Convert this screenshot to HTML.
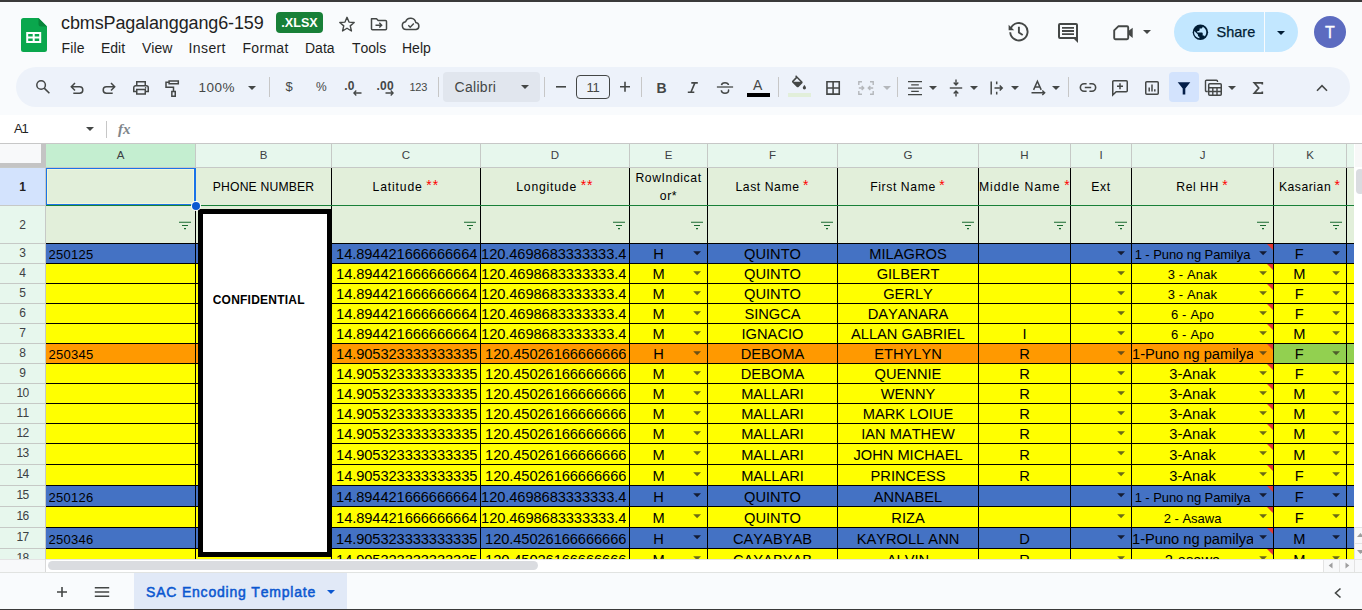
<!DOCTYPE html>
<html><head><meta charset="utf-8"><title>cbmsPagalanggang6-159</title>
<style>
html,body{margin:0;padding:0;}
body{font-kerning:none;width:1362px;height:610px;overflow:hidden;position:relative;background:#f9fbfd;font-family:"Liberation Sans",sans-serif;color:#1f1f1f;}
div,svg,span{position:absolute;}
#grid{left:0;top:0;width:1362px;height:559px;overflow:hidden;}
#grid div{overflow:hidden;white-space:nowrap;}
.ch{height:22px;line-height:23px;text-align:center;font-size:11.5px;color:#3c4043;}
.rh{left:0;width:45px;text-align:center;font-size:12px;color:#3c4043;}
.h1{text-align:center;font-size:12.2px;color:#000;}
.h1 b{color:#f00;font-weight:normal;position:relative;top:-1.5px;left:-.5px;font-size:14px;line-height:0;}
.ca{text-align:center;font-size:14.670px;color:#000;}
.cc{text-align:center;font-size:13px;color:#000;}
.conf{font-weight:bold;font-size:12px;line-height:14px;color:#000;}
.t{white-space:nowrap;}
</style></head><body>
<div style="left:0;top:0;width:1362px;height:2px;background:#3a3a3a"></div>
<!-- top bar -->
<svg style="left:21px;top:18px" width="26" height="34" viewBox="0 0 26 34"><path d="M2.500 0h15L26 8.500V31.500a2.500 2.500 0 0 1-2.500 2.500h-21A2.500 2.500 0 0 1 0 31.500v-29A2.500 2.500 0 0 1 2.500 0z" fill="#0aa74d"/><path d="M17.500 0L26 8.500h-6A2.500 2.500 0 0 1 17.500 6z" fill="#07853a"/><path d="M5.200 14v11h15V14zm2 2h4.500v2.500H7.200zm6.500 0h4.500v2.500h-4.500zm-6.500 4.500h4.500V23H7.200zm6.500 0h4.500V23h-4.500z" fill="#fff"/></svg>
<div class="t" style="left:61px;top:12px;font-size:18px;line-height:22px;color:#1f1f1f;letter-spacing:-.12px;">cbmsPagalanggang6-159</div>
<div class="t" style="left:276px;top:12px;width:47px;height:21px;border-radius:4px;background:#188038;color:#fff;font-weight:bold;font-size:12.600px;line-height:23.500px;text-align:center;">.XLSX</div>
<div class="t menu" style="left:61.500px;top:40px;font-size:14px;line-height:16px;color:#1f1f1f;letter-spacing:.2px">File</div>
<div class="t menu" style="left:101px;top:40px;font-size:14px;line-height:16px;">Edit</div>
<div class="t menu" style="left:142px;top:40px;font-size:14px;line-height:16px;">View</div>
<div class="t menu" style="left:188.500px;top:40px;font-size:14px;line-height:16px;letter-spacing:.4px">Insert</div>
<div class="t menu" style="left:242.500px;top:40px;font-size:14px;line-height:16px;letter-spacing:.3px">Format</div>
<div class="t menu" style="left:305px;top:40px;font-size:14px;line-height:16px;">Data</div>
<div class="t menu" style="left:352px;top:40px;font-size:14px;line-height:16px;">Tools</div>
<div class="t menu" style="left:402px;top:40px;font-size:14px;line-height:16px;">Help</div>
<!-- share -->
<div style="left:1174px;top:12px;width:124px;height:40px;border-radius:20px;background:#c2e7ff;"></div>
<div style="left:1264px;top:12px;width:1px;height:40px;background:#f9fbfd;"></div>
<div class="t" style="left:1216.500px;top:22px;font-size:14.500px;line-height:20px;color:#001d35;-webkit-text-stroke:.25px #001d35;">Share</div>
<div style="left:1314px;top:16px;width:32px;height:32px;border-radius:50%;background:#5c6bc0;color:#fff;font-size:16px;line-height:33px;text-align:center;-webkit-text-stroke:.3px #fff;">T</div>
<svg style="left:338px;top:15px" width="18" height="18" viewBox="0 0 18 18"><path d="M9 2.300L11 7.100L16.200 7.500L12.250 10.900L13.450 16L9 13.250L4.550 16L5.750 10.900L1.800 7.500L7 7.100z" stroke="#444746" stroke-width="1.4" fill="none" stroke-linejoin="round"/></svg>
<svg style="left:370px;top:17px" width="18" height="14" viewBox="0 0 18 14"><path d="M1.500 1.750H6.500L8.200 3.500H15.500a1 1 0 0 1 1 1V11.800a1 1 0 0 1-1 1H2.500a1 1 0 0 1-1-1V1.750z" stroke="#444746" stroke-width="1.5" fill="none" stroke-linejoin="round"/><path d="M5.500 8.200H11.500M9.300 5.800L11.700 8.200L9.300 10.600" stroke="#444746" stroke-width="1.4" fill="none" /></svg>
<svg style="left:401px;top:17px" width="20" height="14" viewBox="0 0 20 14"><path d="M5.200 12.500a3.900 3.900 0 0 1-.6-7.750A5.300 5.300 0 0 1 14.800 5.600a3.500 3.500 0 0 1 .3 6.900z" stroke="#444746" stroke-width="1.5" fill="none" stroke-linejoin="round"/><path d="M7.300 8.300L9.200 10.200L12.800 6.600" stroke="#444746" stroke-width="1.4" fill="none" /></svg>
<svg style="left:1008px;top:21px" width="22" height="22" viewBox="0 0 22 22"><path d="M2.900 7.200A8.700 8.700 0 1 1 2.200 11.300" stroke="#444746" stroke-width="1.9" fill="none" /><path d="M.6 3.700V9.300H6.200z" fill="#444746"/><path d="M10.900 5.700V11.500L14.700 14" stroke="#444746" stroke-width="1.9" fill="none" /></svg>
<svg style="left:1057px;top:22px" width="22" height="22" viewBox="0 0 22 22"><path d="M3 1H19a2 2 0 0 1 2 2V21L17 17H3a2 2 0 0 1-2-2V3a2 2 0 0 1 2-2zM3 3V15H19V3z" fill="#444746"/><path d="M5 5H17V6.800H5zM5 8.100H17V9.900H5zM5 11.200H17V13H5z" fill="#444746"/></svg>
<svg style="left:1112px;top:24px" width="22" height="18" viewBox="0 0 22 18"><path d="M6.300 2.300H15a1.200 1.200 0 0 1 1.200 1.200V14a1.200 1.200 0 0 1-1.200 1.200H3.400a1.200 1.200 0 0 1-1.200-1.200V6.400z" stroke="#444746" stroke-width="1.9" fill="none" stroke-linejoin="round"/><path d="M16 7.300L20.700 3.700V13.900L16 10.300z" fill="#444746"/></svg>
<svg style="left:1143.0px;top:29.5px" width="8" height="4" viewBox="0 0 8 4"><path d="M0 0h8L4.0 4z" fill="#444746"/></svg>
<svg style="left:1192px;top:24px" width="17" height="17" viewBox="0 0 17 17"><circle cx="8.400" cy="8.300" r="7.700" fill="#001d35"/><path d="M7.400 14.300v-1.500c-.8 0-1.500-.7-1.500-1.500v-.8L2.300 6.900c-.1.500-.2.900-.2 1.400 0 3.100 2.300 5.600 5.300 6zM12.800 12.400c.8-.9 1.300-2.100 1.500-3.300.3-2.800-1.300-5.300-3.700-6.300v.3c0 .8-.7 1.500-1.500 1.500H7.600v1.500c0 .4-.3.800-.8.800H5.300v1.500h4.600c.4 0 .8.300.8.800v2.300h.8c.6-.1 1.100.3 1.300.9z" fill="#c2e7ff"/></svg>
<svg style="left:1277.0px;top:30.5px" width="8" height="4" viewBox="0 0 8 4"><path d="M0 0h8L4.0 4z" fill="#001d35"/></svg>
<!-- toolbar -->
<div style="left:16px;top:67px;width:1334px;height:40px;border-radius:20px;background:#edf2fa;"></div>
<svg style="left:35px;top:79px" width="16" height="16" viewBox="0 0 16 16"><circle cx="6.1" cy="6" r="4.3" stroke="#444746" stroke-width="1.5" fill="none"/><path d="M9.2 9.1L14.4 14.3" stroke="#444746" stroke-width="1.6" fill="none" /></svg>
<svg style="left:70px;top:80px" width="16" height="16" viewBox="0 0 16 16"><path d="M5 3L1.3 6.8L5 10.6M1.6 6.8H9.6a3.2 3.2 0 0 1 0 6.4H3.3" stroke="#444746" stroke-width="1.5" fill="none" /></svg>
<svg style="left:100px;top:80px" width="16" height="16" viewBox="0 0 16 16"><path d="M11 3L14.7 6.8L11 10.6M14.400 6.8H6.4a3.2 3.2 0 0 0 0 6.4H12.7" stroke="#444746" stroke-width="1.5" fill="none" /></svg>
<svg style="left:132px;top:80px" width="18" height="16" viewBox="0 0 18 16"><path d="M4.75 5.5V1.75h8.5V5.5" stroke="#444746" stroke-width="1.5" fill="none" /><path d="M4.75 11.5H1.75V7.700a2 2 0 0 1 2-2h10.500a2 2 0 0 1 2 2V11.500H13.250" stroke="#444746" stroke-width="1.5" fill="none" /><path d="M4.750 9.500h8.500v4.500h-8.500z" stroke="#444746" stroke-width="1.5" fill="none" /><circle cx="13.6" cy="7.900" r=".8" fill="#444746"/></svg>
<svg style="left:164px;top:79px" width="16" height="19" viewBox="0 0 16 19"><path d="M5.1 1.950h9.200v2.700H5.100z" stroke="#444746" stroke-width="1.5" fill="none" /><path d="M5 3.300H2V8.200H9.500V12.200" stroke="#444746" stroke-width="1.5" fill="none" /><path d="M7.850 12.600h3.400v4.600h-3.400z" stroke="#444746" stroke-width="1.5" fill="none" /></svg>
<div class="t" style="left:198.5px;top:79.5px;font-size:13.5px;line-height:15.5px;color:#444746;letter-spacing:.5px">100%</div>
<svg style="left:248.0px;top:85.7px" width="8" height="4" viewBox="0 0 8 4"><path d="M0 0h8L4.0 4z" fill="#444746"/></svg>
<div style="left:269px;top:77px;width:1px;height:20px;background:#c7c7c7"></div>
<div class="t" style="left:285.4px;top:79px;font-size:13px;line-height:15px;color:#444746;">$</div>
<div class="t" style="left:316px;top:80px;font-size:12px;line-height:14px;color:#444746;">%</div>
<div class="t" style="left:344.3px;top:78.5px;font-size:12px;line-height:14px;color:#444746;font-weight:bold;letter-spacing:.2px">.0</div>
<svg style="left:353px;top:90px" width="9" height="6" viewBox="0 0 9 6"><path d="M.8 3H8.500M3.300 .5L.8 3L3.300 5.500" stroke="#444746" stroke-width="1.3" fill="none" /></svg>
<div class="t" style="left:376.5px;top:78.5px;font-size:12px;line-height:14px;color:#444746;font-weight:bold;letter-spacing:.2px">.00</div>
<svg style="left:384.5px;top:90px" width="9" height="6" viewBox="0 0 9 6"><path d="M.5 3H8.200M5.700 .5L8.200 3L5.700 5.500" stroke="#444746" stroke-width="1.3" fill="none" /></svg>
<div class="t" style="left:409.5px;top:81px;font-size:11px;line-height:13px;color:#444746;letter-spacing:-.3px">123</div>
<div style="left:438px;top:77px;width:1px;height:20px;background:#c7c7c7"></div>
<div style="left:443px;top:72px;width:97px;height:30px;border-radius:4px;background:#e1e6ee"></div>
<div class="t" style="left:454.5px;top:79px;font-size:14px;line-height:16px;color:#444746;letter-spacing:.3px">Calibri</div>
<svg style="left:521.0px;top:85.0px" width="8" height="4" viewBox="0 0 8 4"><path d="M0 0h8L4.0 4z" fill="#444746"/></svg>
<div style="left:544px;top:77px;width:1px;height:20px;background:#c7c7c7"></div>
<svg style="left:555px;top:82px" width="12" height="10" viewBox="0 0 12 10"><path d="M1 4.800H11" stroke="#444746" stroke-width="1.6" fill="none" /></svg>
<div style="left:576px;top:75px;width:34px;height:24px;border-radius:4px;border:1px solid #444746;box-sizing:border-box"></div>
<div class="t" style="left:576px;top:75px;width:34px;height:24px;line-height:25px;text-align:center;font-size:13px;letter-spacing:-1.300px;text-indent:-1px;color:#444746">11</div>
<svg style="left:619px;top:81px" width="12" height="12" viewBox="0 0 12 12"><path d="M1 5.800H11M6 .8V10.800" stroke="#444746" stroke-width="1.6" fill="none" /></svg>
<div style="left:641px;top:77px;width:1px;height:20px;background:#c7c7c7"></div>
<div class="t" style="left:656.5px;top:79.5px;font-size:14px;line-height:16px;color:#444746;font-weight:bold">B</div>
<svg style="left:686px;top:80px" width="14" height="14" viewBox="0 0 14 14"><path d="M5.300 2.900H11.800M1.800 12.300H8.300M8.900 2.900L4.900 12.300" stroke="#444746" stroke-width="1.6" fill="none" /></svg>
<svg style="left:716px;top:81px" width="18" height="14" viewBox="0 0 18 14"><path d="M.9 6H17.100" stroke="#444746" stroke-width="1.3" fill="none" /><path d="M5.500 4.200C5.700 2.400 7.300 1.700 9 1.700s3.300 .7 3.500 2.300" stroke="#444746" stroke-width="1.5" fill="none" /><path d="M5.300 9.200C5.500 11.300 7.200 12.300 9 12.300s3.600-1 3.600-2.700c0-.5-.1-.8-.3-1.100" stroke="#444746" stroke-width="1.5" fill="none" /></svg>
<div class="t" style="left:753px;top:76.5px;font-size:14px;line-height:16px;color:#444746;">A</div>
<div style="left:747px;top:93px;width:23px;height:4px;background:#000"></div>
<div style="left:778px;top:77px;width:1px;height:20px;background:#c7c7c7"></div>
<svg style="left:788px;top:75px" width="24" height="16" viewBox="0 0 24 16"><path d="M7.100 1.300L8.100 .3L14.300 6.500C14.800 7 14.800 7.700 14.300 8.200L10.600 11.900C10.100 12.400 9.300 12.400 8.800 11.900L4.300 7.400C3.800 6.900 3.800 6.200 4.300 5.700L7.900 2.100zM9 3.200L5.500 6.700H12.500z" fill="#444746"/><path d="M16.400 9.900s-1.600 1.800-1.600 2.900a1.600 1.600 0 0 0 3.200 0c0-1.100-1.600-2.900-1.600-2.900z" fill="#444746"/></svg>
<div style="left:788px;top:93px;width:23px;height:4px;background:#e2efda"></div>
<svg style="left:825px;top:80px" width="16" height="16" viewBox="0 0 16 16"><path d="M1.950 1.800h12.300v12.300H1.950zM8.100 1.800v12.300M1.950 7.950h12.300" stroke="#444746" stroke-width="1.6" fill="none" /></svg>
<svg style="left:857px;top:80px" width="18" height="16" viewBox="0 0 18 16"><path d="M5 1.800H1.800V5M1.800 11v3.200H5M13 1.800h3.200V5M16.200 11v3.200H13" stroke="#b4b7bb" stroke-width="1.4" fill="none" /><path d="M1.800 8H6.500M4.700 6L6.700 8L4.700 10M16.200 8H11.500M13.300 6L11.300 8L13.300 10" stroke="#b4b7bb" stroke-width="1.4" fill="none" /></svg>
<svg style="left:882.8px;top:85.7px" width="8" height="4" viewBox="0 0 8 4"><path d="M0 0h8L4.0 4z" fill="#b4b7bb"/></svg>
<div style="left:897px;top:77px;width:1px;height:20px;background:#c7c7c7"></div>
<svg style="left:907px;top:80px" width="16" height="16" viewBox="0 0 16 16"><path d="M1 1.600H15M4.200 4.850H11.800M1 8.100H15M4.200 11.350H11.800M1 14.600H15" stroke="#444746" stroke-width="1.2" fill="none" /></svg>
<svg style="left:929.2px;top:85.7px" width="8" height="4" viewBox="0 0 8 4"><path d="M0 0h8L4.0 4z" fill="#444746"/></svg>
<svg style="left:948px;top:79px" width="16" height="18" viewBox="0 0 16 18"><path d="M1.800 9H14.200" stroke="#444746" stroke-width="1.4" fill="none" /><path d="M8 .5V5.500M5.700 3.600L8 5.900L10.300 3.600M8 17.500V12.500M5.700 14.400L8 12.100L10.300 14.400" stroke="#444746" stroke-width="1.4" fill="none" /></svg>
<svg style="left:969.8px;top:85.7px" width="8" height="4" viewBox="0 0 8 4"><path d="M0 0h8L4.0 4z" fill="#444746"/></svg>
<svg style="left:989px;top:80px" width="16" height="16" viewBox="0 0 16 16"><path d="M2.200 1.500V14.500" stroke="#444746" stroke-width="1.5" fill="none" /><path d="M7.700 1.500V4.200M7.700 11.800V14.500" stroke="#444746" stroke-width="1.5" fill="none" /><path d="M5.500 8H13M10.700 5.500L13.200 8L10.700 10.500" stroke="#444746" stroke-width="1.5" fill="none" /></svg>
<svg style="left:1010.8px;top:85.7px" width="8" height="4" viewBox="0 0 8 4"><path d="M0 0h8L4.0 4z" fill="#444746"/></svg>
<svg style="left:1030px;top:79px" width="17" height="18" viewBox="0 0 17 18"><path d="M3.600 10.900L7.400 2.300L11.200 10.900M4.900 8H9.900" stroke="#444746" stroke-width="1.5" fill="none" /><path d="M1.500 13.800H14.500M12.300 11.500L14.700 13.800L12.300 16.100" stroke="#444746" stroke-width="1.4" fill="none" /></svg>
<svg style="left:1051.9px;top:85.7px" width="8" height="4" viewBox="0 0 8 4"><path d="M0 0h8L4.0 4z" fill="#444746"/></svg>
<div style="left:1068px;top:77px;width:1px;height:20px;background:#c7c7c7"></div>
<svg style="left:1079px;top:82px" width="18" height="12" viewBox="0 0 18 12"><path d="M7.600 1.750H5.100a3.750 3.750 0 0 0 0 7.500H7.600M10.400 1.750H12.900a3.750 3.750 0 0 1 0 7.500H10.400M5.800 5.500H12.200" stroke="#444746" stroke-width="1.6" fill="none" /></svg>
<svg style="left:1111px;top:79px" width="18" height="18" viewBox="0 0 18 18"><path d="M2.750 1.750H15.250a1 1 0 0 1 1 1V11.750a1 1 0 0 1-1 1H5.200L1.750 16V2.750a1 1 0 0 1 1-1z" stroke="#444746" stroke-width="1.5" fill="none" /><path d="M9 4.200V10.200M6 7.200H12" stroke="#444746" stroke-width="1.5" fill="none" /></svg>
<svg style="left:1144px;top:80px" width="16" height="16" viewBox="0 0 16 16"><path d="M2.750 1.750H13.250a1 1 0 0 1 1 1V13.250a1 1 0 0 1-1 1H2.750a1 1 0 0 1-1-1V2.750a1 1 0 0 1 1-1z" stroke="#444746" stroke-width="1.5" fill="none" /><path d="M5.200 7.500V11.500M8 4.500V11.500M10.800 9.300V11.500" stroke="#444746" stroke-width="1.5" fill="none" /></svg>
<div style="left:1169px;top:72px;width:30px;height:30px;border-radius:4px;background:#d3e3fd"></div>
<svg style="left:1176px;top:81px" width="16" height="15" viewBox="0 0 16 15"><path d="M1.700 1.200H14.300L9.300 7.600V13.500H6.700V7.600z" fill="#041e49"/></svg>
<svg style="left:1204px;top:79px" width="19" height="18" viewBox="0 0 19 18"><path d="M3.800 12.500H2.500a1 1 0 0 1-1-1V2.200a1 1 0 0 1 1-1H12.500a1 1 0 0 1 1 1V3" stroke="#444746" stroke-width="1.4" fill="none" /><path d="M5.700 4.750H16.250a1 1 0 0 1 1 1V15.250a1 1 0 0 1-1 1H5.700a1 1 0 0 1-1-1V5.750a1 1 0 0 1 1-1z" stroke="#444746" stroke-width="1.5" fill="none" /><path d="M4.700 8.700H17.250M4.700 12.500H17.250M8.800 8.700V16.250M13 8.700V16.250" stroke="#444746" stroke-width="1.4" fill="none" /></svg>
<svg style="left:1228.0px;top:85.7px" width="8" height="4" viewBox="0 0 8 4"><path d="M0 0h8L4.0 4z" fill="#444746"/></svg>
<svg style="left:1252px;top:81px" width="12" height="14" viewBox="0 0 12 14"><path d="M10.300 3.400V1.900H2.300L6.700 7L2.300 12.100H10.300V10.600" stroke="#444746" stroke-width="1.7" fill="none" /></svg>
<svg style="left:1316px;top:84px" width="12" height="8" viewBox="0 0 12 8"><path d="M1 6.700L6 1.700L11 6.700" stroke="#444746" stroke-width="1.6" fill="none" /></svg>
<!-- formula bar -->
<div style="left:0;top:115px;width:1362px;height:28px;background:#fff;"></div>
<div style="left:0;top:143px;width:1362px;height:1px;background:#c7c7c7;"></div>
<div class="t" style="left:14px;top:121px;font-size:13px;line-height:16px;color:#1f1f1f;letter-spacing:-1.2px;">A1</div>
<svg style="left:86px;top:127px" width="8" height="4" viewBox="0 0 8 4"><path d="M0 0h8L4 4z" fill="#444746"/></svg>
<div style="left:106px;top:121px;width:1px;height:17px;background:#c7c7c7;"></div>
<div class="t" style="left:118px;top:120px;font-size:15px;line-height:18px;color:#80868b;font-style:italic;font-weight:bold;font-family:'Liberation Serif',serif;">fx</div>
<div id="grid">
<div style="left:0px;top:144px;width:1354px;height:24px;background:#e7f7ed"></div>
<div style="left:46px;top:144px;width:150px;height:23px;background:#c4eed0"></div>
<div class="ch" style="left:46px;top:144px;width:149px;">A</div>
<div style="left:195px;top:144px;width:1px;height:24px;background:#c6c9c6"></div>
<div class="ch" style="left:196px;top:144px;width:135px;">B</div>
<div style="left:331px;top:144px;width:1px;height:24px;background:#c6c9c6"></div>
<div class="ch" style="left:332px;top:144px;width:148px;">C</div>
<div style="left:480px;top:144px;width:1px;height:24px;background:#c6c9c6"></div>
<div class="ch" style="left:481px;top:144px;width:148px;">D</div>
<div style="left:629px;top:144px;width:1px;height:24px;background:#c6c9c6"></div>
<div class="ch" style="left:630px;top:144px;width:77px;">E</div>
<div style="left:707px;top:144px;width:1px;height:24px;background:#c6c9c6"></div>
<div class="ch" style="left:708px;top:144px;width:129px;">F</div>
<div style="left:837px;top:144px;width:1px;height:24px;background:#c6c9c6"></div>
<div class="ch" style="left:838px;top:144px;width:140px;">G</div>
<div style="left:978px;top:144px;width:1px;height:24px;background:#c6c9c6"></div>
<div class="ch" style="left:979px;top:144px;width:91px;">H</div>
<div style="left:1070px;top:144px;width:1px;height:24px;background:#c6c9c6"></div>
<div class="ch" style="left:1071px;top:144px;width:60px;">I</div>
<div style="left:1131px;top:144px;width:1px;height:24px;background:#c6c9c6"></div>
<div class="ch" style="left:1132px;top:144px;width:141px;">J</div>
<div style="left:1273px;top:144px;width:1px;height:24px;background:#c6c9c6"></div>
<div class="ch" style="left:1274px;top:144px;width:72px;">K</div>
<div style="left:1346px;top:144px;width:1px;height:24px;background:#c6c9c6"></div>
<div style="left:1354px;top:144px;width:1px;height:24px;background:#c6c9c6"></div>
<div style="left:46px;top:167px;width:1308px;height:1px;background:#c6c9c6"></div>
<div style="left:0px;top:168px;width:46px;height:391px;background:#e7f7ed"></div>
<div style="left:0px;top:168px;width:46px;height:37px;background:#d3e3fd"></div>
<div class="rh" style="top:168px;height:37px;line-height:39px;font-weight:bold;color:#1f1f1f;">1</div>
<div style="left:0px;top:205px;width:46px;height:1px;background:#c6c9c6"></div>
<div class="rh" style="top:206px;height:37px;line-height:38px;">2</div>
<div style="left:0px;top:243px;width:46px;height:1px;background:#c6c9c6"></div>
<div class="rh" style="top:244px;height:19px;line-height:19px;">3</div>
<div style="left:0px;top:263px;width:46px;height:1px;background:#c6c9c6"></div>
<div class="rh" style="top:264px;height:19px;line-height:19px;">4</div>
<div style="left:0px;top:283px;width:46px;height:1px;background:#c6c9c6"></div>
<div class="rh" style="top:284px;height:19px;line-height:19px;">5</div>
<div style="left:0px;top:303px;width:46px;height:1px;background:#c6c9c6"></div>
<div class="rh" style="top:304px;height:19px;line-height:19px;">6</div>
<div style="left:0px;top:323px;width:46px;height:1px;background:#c6c9c6"></div>
<div class="rh" style="top:324px;height:19px;line-height:19px;">7</div>
<div style="left:0px;top:343px;width:46px;height:1px;background:#c6c9c6"></div>
<div class="rh" style="top:344px;height:19px;line-height:19px;">8</div>
<div style="left:0px;top:363px;width:46px;height:1px;background:#c6c9c6"></div>
<div class="rh" style="top:364px;height:19px;line-height:19px;">9</div>
<div style="left:0px;top:383px;width:46px;height:1px;background:#c6c9c6"></div>
<div class="rh" style="top:384px;height:19px;line-height:19px;letter-spacing:-.6px;">10</div>
<div style="left:0px;top:403px;width:46px;height:1px;background:#c6c9c6"></div>
<div class="rh" style="top:404px;height:19px;line-height:19px;letter-spacing:-.6px;">11</div>
<div style="left:0px;top:423px;width:46px;height:1px;background:#c6c9c6"></div>
<div class="rh" style="top:424px;height:19px;line-height:19px;letter-spacing:-.6px;">12</div>
<div style="left:0px;top:443px;width:46px;height:1px;background:#c6c9c6"></div>
<div class="rh" style="top:444px;height:20px;line-height:19px;letter-spacing:-.6px;">13</div>
<div style="left:0px;top:464px;width:46px;height:1px;background:#c6c9c6"></div>
<div class="rh" style="top:465px;height:20px;line-height:19px;letter-spacing:-.6px;">14</div>
<div style="left:0px;top:485px;width:46px;height:1px;background:#c6c9c6"></div>
<div class="rh" style="top:486px;height:20px;line-height:19px;letter-spacing:-.6px;">15</div>
<div style="left:0px;top:506px;width:46px;height:1px;background:#c6c9c6"></div>
<div class="rh" style="top:507px;height:20px;line-height:19px;letter-spacing:-.6px;">16</div>
<div style="left:0px;top:527px;width:46px;height:1px;background:#c6c9c6"></div>
<div class="rh" style="top:528px;height:20px;line-height:19px;letter-spacing:-.6px;">17</div>
<div style="left:0px;top:548px;width:46px;height:1px;background:#c6c9c6"></div>
<div class="rh" style="top:549px;height:20px;line-height:19px;letter-spacing:-.6px;">18</div>
<div style="left:0px;top:569px;width:46px;height:1px;background:#c6c9c6"></div>
<div style="left:45px;top:168px;width:1px;height:391px;background:#c6c9c6"></div>
<div style="left:0px;top:144px;width:46px;height:23px;background:#c4c4c4"></div>
<div style="left:0px;top:144px;width:41px;height:19px;background:#f8f9fa"></div>
<div style="left:0px;top:167px;width:46px;height:1px;background:#c6c9c6"></div>
<div style="left:46px;top:168px;width:1308px;height:76px;background:#e2efda"></div>
<div style="left:46px;top:244px;width:1308px;height:20px;background:#4472c4"></div>
<div style="left:46px;top:263px;width:1308px;height:1px;background:#000"></div>
<div style="left:46px;top:264px;width:1308px;height:20px;background:#ffff00"></div>
<div style="left:46px;top:283px;width:1308px;height:1px;background:#000"></div>
<div style="left:46px;top:284px;width:1308px;height:20px;background:#ffff00"></div>
<div style="left:46px;top:303px;width:1308px;height:1px;background:#000"></div>
<div style="left:46px;top:304px;width:1308px;height:20px;background:#ffff00"></div>
<div style="left:46px;top:323px;width:1308px;height:1px;background:#000"></div>
<div style="left:46px;top:324px;width:1308px;height:20px;background:#ffff00"></div>
<div style="left:46px;top:343px;width:1308px;height:1px;background:#000"></div>
<div style="left:46px;top:344px;width:1308px;height:20px;background:#ff9900"></div>
<div style="left:1274px;top:344px;width:81px;height:19px;background:#92d050"></div>
<div style="left:46px;top:363px;width:1308px;height:1px;background:#000"></div>
<div style="left:46px;top:364px;width:1308px;height:20px;background:#ffff00"></div>
<div style="left:46px;top:383px;width:1308px;height:1px;background:#000"></div>
<div style="left:46px;top:384px;width:1308px;height:20px;background:#ffff00"></div>
<div style="left:46px;top:403px;width:1308px;height:1px;background:#000"></div>
<div style="left:46px;top:404px;width:1308px;height:20px;background:#ffff00"></div>
<div style="left:46px;top:423px;width:1308px;height:1px;background:#000"></div>
<div style="left:46px;top:424px;width:1308px;height:20px;background:#ffff00"></div>
<div style="left:46px;top:443px;width:1308px;height:1px;background:#000"></div>
<div style="left:46px;top:444px;width:1308px;height:21px;background:#ffff00"></div>
<div style="left:46px;top:464px;width:1308px;height:1px;background:#000"></div>
<div style="left:46px;top:465px;width:1308px;height:21px;background:#ffff00"></div>
<div style="left:46px;top:485px;width:1308px;height:1px;background:#000"></div>
<div style="left:46px;top:486px;width:1308px;height:21px;background:#4472c4"></div>
<div style="left:46px;top:506px;width:1308px;height:1px;background:#000"></div>
<div style="left:46px;top:507px;width:1308px;height:21px;background:#ffff00"></div>
<div style="left:46px;top:527px;width:1308px;height:1px;background:#000"></div>
<div style="left:46px;top:528px;width:1308px;height:21px;background:#4472c4"></div>
<div style="left:46px;top:548px;width:1308px;height:1px;background:#000"></div>
<div style="left:46px;top:549px;width:1308px;height:21px;background:#ffff00"></div>
<div style="left:46px;top:569px;width:1308px;height:1px;background:#000"></div>
<div style="left:46px;top:243px;width:1308px;height:1px;background:#000"></div>
<div style="left:195px;top:206px;width:1px;height:353px;background:#000"></div>
<div style="left:331px;top:168px;width:1px;height:391px;background:#000"></div>
<div style="left:480px;top:168px;width:1px;height:391px;background:#000"></div>
<div style="left:629px;top:168px;width:1px;height:391px;background:#000"></div>
<div style="left:707px;top:168px;width:1px;height:391px;background:#000"></div>
<div style="left:837px;top:168px;width:1px;height:391px;background:#000"></div>
<div style="left:978px;top:168px;width:1px;height:391px;background:#000"></div>
<div style="left:1070px;top:168px;width:1px;height:391px;background:#000"></div>
<div style="left:1131px;top:168px;width:1px;height:391px;background:#000"></div>
<div style="left:1273px;top:168px;width:1px;height:391px;background:#000"></div>
<div style="left:1346px;top:168px;width:1px;height:391px;background:#000"></div>
<div style="left:46px;top:205px;width:1308px;height:1px;background:#188038"></div>
<svg class="fi" style="left:179px;top:221px" width="12" height="9" viewBox="0 0 12 9"><path d="M0 1.300h12M3 4.500h6M5 7.600h2" stroke="#1a6b30" stroke-width="1.1" fill="none"/></svg>
<div class="h1" style="left:196px;top:169px;width:135px;height:36px;line-height:37px;letter-spacing:0.163px;">PHONE NUMBER</div>
<div class="h1" style="left:332px;top:169px;width:148px;height:36px;line-height:37px;letter-spacing:0.836px;">Latitude <b>**</b></div>
<svg class="fi" style="left:464px;top:221px" width="12" height="9" viewBox="0 0 12 9"><path d="M0 1.300h12M3 4.500h6M5 7.600h2" stroke="#1a6b30" stroke-width="1.1" fill="none"/></svg>
<div class="h1" style="left:481px;top:169px;width:148px;height:36px;line-height:37px;letter-spacing:0.81px;">Longitude <b>**</b></div>
<svg class="fi" style="left:613px;top:221px" width="12" height="9" viewBox="0 0 12 9"><path d="M0 1.300h12M3 4.500h6M5 7.600h2" stroke="#1a6b30" stroke-width="1.1" fill="none"/></svg>
<div class="h1" style="left:630px;top:168px;width:77px;height:35px;line-height:17.6px;padding-top:2px;letter-spacing:0.595px;">RowIndicat<br>or*</div>
<svg class="fi" style="left:691px;top:221px" width="12" height="9" viewBox="0 0 12 9"><path d="M0 1.300h12M3 4.500h6M5 7.600h2" stroke="#1a6b30" stroke-width="1.1" fill="none"/></svg>
<div class="h1" style="left:708px;top:169px;width:129px;height:36px;line-height:37px;letter-spacing:0.579px;">Last Name <b>*</b></div>
<svg class="fi" style="left:821px;top:221px" width="12" height="9" viewBox="0 0 12 9"><path d="M0 1.300h12M3 4.500h6M5 7.600h2" stroke="#1a6b30" stroke-width="1.1" fill="none"/></svg>
<div class="h1" style="left:838px;top:169px;width:140px;height:36px;line-height:37px;letter-spacing:0.601px;">First Name <b>*</b></div>
<svg class="fi" style="left:962px;top:221px" width="12" height="9" viewBox="0 0 12 9"><path d="M0 1.300h12M3 4.500h6M5 7.600h2" stroke="#1a6b30" stroke-width="1.1" fill="none"/></svg>
<div class="h1" style="left:979px;top:169px;width:91px;height:36px;line-height:37px;letter-spacing:0.884px;">Middle Name <b>*</b></div>
<svg class="fi" style="left:1054px;top:221px" width="12" height="9" viewBox="0 0 12 9"><path d="M0 1.300h12M3 4.500h6M5 7.600h2" stroke="#1a6b30" stroke-width="1.1" fill="none"/></svg>
<div class="h1" style="left:1071px;top:169px;width:60px;height:36px;line-height:37px;letter-spacing:0.591px;">Ext</div>
<svg class="fi" style="left:1115px;top:221px" width="12" height="9" viewBox="0 0 12 9"><path d="M0 1.300h12M3 4.500h6M5 7.600h2" stroke="#1a6b30" stroke-width="1.1" fill="none"/></svg>
<div class="h1" style="left:1132px;top:169px;width:141px;height:36px;line-height:37px;letter-spacing:0.531px;">Rel HH <b>*</b></div>
<svg class="fi" style="left:1257px;top:221px" width="12" height="9" viewBox="0 0 12 9"><path d="M0 1.300h12M3 4.500h6M5 7.600h2" stroke="#1a6b30" stroke-width="1.1" fill="none"/></svg>
<div class="h1" style="left:1274px;top:169px;width:72px;height:36px;line-height:37px;letter-spacing:0.521px;">Kasarian <b>*</b></div>
<svg class="fi" style="left:1330px;top:221px" width="12" height="9" viewBox="0 0 12 9"><path d="M0 1.300h12M3 4.500h6M5 7.600h2" stroke="#1a6b30" stroke-width="1.1" fill="none"/></svg>
<div class="cc" style="left:48.5px;top:247.10px;width:146.5px;height:16px;line-height:16px;text-align:left;letter-spacing:0.27px;">250125</div>
<div class="ca" style="left:332px;top:245.72px;width:145.3px;height:16px;line-height:16px;text-align:right;letter-spacing:-.08px;">14.894421666666664</div>
<div class="ca" style="left:481px;top:245.72px;width:145.3px;height:16px;line-height:16px;text-align:right;letter-spacing:-.08px;">120.4698683333333.4</div>
<div class="ca" style="left:630px;top:245.72px;width:57px;height:16px;line-height:16px;text-align:center;">H</div>
<div class="ca" style="left:708px;top:245.72px;width:129px;height:16px;line-height:16px;text-align:center;">QUINTO</div>
<div class="ca" style="left:838px;top:245.72px;width:140px;height:16px;line-height:16px;text-align:center;">MILAGROS</div>
<div class="cc" style="left:1132px;top:247.10px;width:121px;height:16px;line-height:16px;text-align:center;letter-spacing:-0.072px;">1 - Puno ng Pamilya</div>
<div class="ca" style="left:1274px;top:245.72px;width:50.5px;height:16px;line-height:16px;text-align:center;">F</div>
<svg class="fi" style="left:692.5px;top:250.5px" width="9" height="5" viewBox="0 0 9 5"><path d="M.2 .3h7.800L4.100 4.300z" fill="rgba(10,10,20,.82)"/></svg>
<svg class="fi" style="left:1116.5px;top:250.5px" width="9" height="5" viewBox="0 0 9 5"><path d="M.2 .3h7.800L4.100 4.300z" fill="rgba(10,10,20,.82)"/></svg>
<svg class="fi" style="left:1258.5px;top:250.5px" width="9" height="5" viewBox="0 0 9 5"><path d="M.2 .3h7.800L4.100 4.300z" fill="rgba(10,10,20,.82)"/></svg>
<svg class="fi" style="left:1331.5px;top:250.5px" width="9" height="5" viewBox="0 0 9 5"><path d="M.2 .3h7.800L4.100 4.300z" fill="rgba(10,10,20,.82)"/></svg>
<svg class="fi" style="left:1267px;top:244px" width="6" height="6" viewBox="0 0 6 6"><path d="M0 0h6v6z" fill="#e53935"/></svg>
<div class="ca" style="left:332px;top:265.72px;width:145.3px;height:16px;line-height:16px;text-align:right;letter-spacing:-.08px;">14.894421666666664</div>
<div class="ca" style="left:481px;top:265.72px;width:145.3px;height:16px;line-height:16px;text-align:right;letter-spacing:-.08px;">120.4698683333333.4</div>
<div class="ca" style="left:630px;top:265.72px;width:57px;height:16px;line-height:16px;text-align:center;">M</div>
<div class="ca" style="left:708px;top:265.72px;width:129px;height:16px;line-height:16px;text-align:center;">QUINTO</div>
<div class="ca" style="left:838px;top:265.72px;width:140px;height:16px;line-height:16px;text-align:center;">GILBERT</div>
<div class="cc" style="left:1132px;top:267.10px;width:121px;height:16px;line-height:16px;text-align:center;letter-spacing:0.125px;">3 - Anak</div>
<div class="ca" style="left:1274px;top:265.72px;width:50.5px;height:16px;line-height:16px;text-align:center;">M</div>
<svg class="fi" style="left:692.5px;top:270.5px" width="9" height="5" viewBox="0 0 9 5"><path d="M.2 .3h7.800L4.100 4.300z" fill="rgba(50,50,30,.72)"/></svg>
<svg class="fi" style="left:1116.5px;top:270.5px" width="9" height="5" viewBox="0 0 9 5"><path d="M.2 .3h7.800L4.100 4.300z" fill="rgba(50,50,30,.72)"/></svg>
<svg class="fi" style="left:1258.5px;top:270.5px" width="9" height="5" viewBox="0 0 9 5"><path d="M.2 .3h7.800L4.100 4.300z" fill="rgba(50,50,30,.72)"/></svg>
<svg class="fi" style="left:1331.5px;top:270.5px" width="9" height="5" viewBox="0 0 9 5"><path d="M.2 .3h7.800L4.100 4.300z" fill="rgba(50,50,30,.72)"/></svg>
<svg class="fi" style="left:1267px;top:264px" width="6" height="6" viewBox="0 0 6 6"><path d="M0 0h6v6z" fill="#e53935"/></svg>
<div class="ca" style="left:332px;top:285.72px;width:145.3px;height:16px;line-height:16px;text-align:right;letter-spacing:-.08px;">14.894421666666664</div>
<div class="ca" style="left:481px;top:285.72px;width:145.3px;height:16px;line-height:16px;text-align:right;letter-spacing:-.08px;">120.4698683333333.4</div>
<div class="ca" style="left:630px;top:285.72px;width:57px;height:16px;line-height:16px;text-align:center;">M</div>
<div class="ca" style="left:708px;top:285.72px;width:129px;height:16px;line-height:16px;text-align:center;">QUINTO</div>
<div class="ca" style="left:838px;top:285.72px;width:140px;height:16px;line-height:16px;text-align:center;">GERLY</div>
<div class="cc" style="left:1132px;top:287.10px;width:121px;height:16px;line-height:16px;text-align:center;letter-spacing:0.125px;">3 - Anak</div>
<div class="ca" style="left:1274px;top:285.72px;width:50.5px;height:16px;line-height:16px;text-align:center;">F</div>
<svg class="fi" style="left:692.5px;top:290.5px" width="9" height="5" viewBox="0 0 9 5"><path d="M.2 .3h7.800L4.100 4.300z" fill="rgba(50,50,30,.72)"/></svg>
<svg class="fi" style="left:1116.5px;top:290.5px" width="9" height="5" viewBox="0 0 9 5"><path d="M.2 .3h7.800L4.100 4.300z" fill="rgba(50,50,30,.72)"/></svg>
<svg class="fi" style="left:1258.5px;top:290.5px" width="9" height="5" viewBox="0 0 9 5"><path d="M.2 .3h7.800L4.100 4.300z" fill="rgba(50,50,30,.72)"/></svg>
<svg class="fi" style="left:1331.5px;top:290.5px" width="9" height="5" viewBox="0 0 9 5"><path d="M.2 .3h7.800L4.100 4.300z" fill="rgba(50,50,30,.72)"/></svg>
<svg class="fi" style="left:1267px;top:284px" width="6" height="6" viewBox="0 0 6 6"><path d="M0 0h6v6z" fill="#e53935"/></svg>
<div class="ca" style="left:332px;top:305.72px;width:145.3px;height:16px;line-height:16px;text-align:right;letter-spacing:-.08px;">14.894421666666664</div>
<div class="ca" style="left:481px;top:305.72px;width:145.3px;height:16px;line-height:16px;text-align:right;letter-spacing:-.08px;">120.4698683333333.4</div>
<div class="ca" style="left:630px;top:305.72px;width:57px;height:16px;line-height:16px;text-align:center;">M</div>
<div class="ca" style="left:708px;top:305.72px;width:129px;height:16px;line-height:16px;text-align:center;">SINGCA</div>
<div class="ca" style="left:838px;top:305.72px;width:140px;height:16px;line-height:16px;text-align:center;">DAYANARA</div>
<div class="cc" style="left:1132px;top:307.10px;width:121px;height:16px;line-height:16px;text-align:center;letter-spacing:0.186px;">6 - Apo</div>
<div class="ca" style="left:1274px;top:305.72px;width:50.5px;height:16px;line-height:16px;text-align:center;">F</div>
<svg class="fi" style="left:692.5px;top:310.5px" width="9" height="5" viewBox="0 0 9 5"><path d="M.2 .3h7.800L4.100 4.300z" fill="rgba(50,50,30,.72)"/></svg>
<svg class="fi" style="left:1116.5px;top:310.5px" width="9" height="5" viewBox="0 0 9 5"><path d="M.2 .3h7.800L4.100 4.300z" fill="rgba(50,50,30,.72)"/></svg>
<svg class="fi" style="left:1258.5px;top:310.5px" width="9" height="5" viewBox="0 0 9 5"><path d="M.2 .3h7.800L4.100 4.300z" fill="rgba(50,50,30,.72)"/></svg>
<svg class="fi" style="left:1331.5px;top:310.5px" width="9" height="5" viewBox="0 0 9 5"><path d="M.2 .3h7.800L4.100 4.300z" fill="rgba(50,50,30,.72)"/></svg>
<svg class="fi" style="left:1267px;top:304px" width="6" height="6" viewBox="0 0 6 6"><path d="M0 0h6v6z" fill="#e53935"/></svg>
<div class="ca" style="left:332px;top:325.72px;width:145.3px;height:16px;line-height:16px;text-align:right;letter-spacing:-.08px;">14.894421666666664</div>
<div class="ca" style="left:481px;top:325.72px;width:145.3px;height:16px;line-height:16px;text-align:right;letter-spacing:-.08px;">120.4698683333333.4</div>
<div class="ca" style="left:630px;top:325.72px;width:57px;height:16px;line-height:16px;text-align:center;">M</div>
<div class="ca" style="left:708px;top:325.72px;width:129px;height:16px;line-height:16px;text-align:center;">IGNACIO</div>
<div class="ca" style="left:838px;top:325.72px;width:140px;height:16px;line-height:16px;text-align:center;">ALLAN GABRIEL</div>
<div class="ca" style="left:979px;top:325.72px;width:91px;height:16px;line-height:16px;text-align:center;">I</div>
<div class="cc" style="left:1132px;top:327.10px;width:121px;height:16px;line-height:16px;text-align:center;letter-spacing:0.186px;">6 - Apo</div>
<div class="ca" style="left:1274px;top:325.72px;width:50.5px;height:16px;line-height:16px;text-align:center;">M</div>
<svg class="fi" style="left:692.5px;top:330.5px" width="9" height="5" viewBox="0 0 9 5"><path d="M.2 .3h7.800L4.100 4.300z" fill="rgba(50,50,30,.72)"/></svg>
<svg class="fi" style="left:1116.5px;top:330.5px" width="9" height="5" viewBox="0 0 9 5"><path d="M.2 .3h7.800L4.100 4.300z" fill="rgba(50,50,30,.72)"/></svg>
<svg class="fi" style="left:1258.5px;top:330.5px" width="9" height="5" viewBox="0 0 9 5"><path d="M.2 .3h7.800L4.100 4.300z" fill="rgba(50,50,30,.72)"/></svg>
<svg class="fi" style="left:1331.5px;top:330.5px" width="9" height="5" viewBox="0 0 9 5"><path d="M.2 .3h7.800L4.100 4.300z" fill="rgba(50,50,30,.72)"/></svg>
<svg class="fi" style="left:1267px;top:324px" width="6" height="6" viewBox="0 0 6 6"><path d="M0 0h6v6z" fill="#e53935"/></svg>
<div class="cc" style="left:48.5px;top:347.10px;width:146.5px;height:16px;line-height:16px;text-align:left;letter-spacing:0.27px;">250345</div>
<div class="ca" style="left:332px;top:345.72px;width:145.3px;height:16px;line-height:16px;text-align:right;letter-spacing:-.08px;">14.905323333333335</div>
<div class="ca" style="left:481px;top:345.72px;width:145.3px;height:16px;line-height:16px;text-align:right;letter-spacing:-.08px;">120.45026166666666</div>
<div class="ca" style="left:630px;top:345.72px;width:57px;height:16px;line-height:16px;text-align:center;">H</div>
<div class="ca" style="left:708px;top:345.72px;width:129px;height:16px;line-height:16px;text-align:center;">DEBOMA</div>
<div class="ca" style="left:838px;top:345.72px;width:140px;height:16px;line-height:16px;text-align:center;">ETHYLYN</div>
<div class="ca" style="left:979px;top:345.72px;width:91px;height:16px;line-height:16px;text-align:center;">R</div>
<div class="ca" style="left:1132px;top:345.72px;width:121px;height:16px;line-height:16px;text-align:center;">1-Puno ng pamilya</div>
<div class="ca" style="left:1274px;top:345.72px;width:50.5px;height:16px;line-height:16px;text-align:center;">F</div>
<svg class="fi" style="left:692.5px;top:350.5px" width="9" height="5" viewBox="0 0 9 5"><path d="M.2 .3h7.800L4.100 4.300z" fill="rgba(50,50,30,.72)"/></svg>
<svg class="fi" style="left:1116.5px;top:350.5px" width="9" height="5" viewBox="0 0 9 5"><path d="M.2 .3h7.800L4.100 4.300z" fill="rgba(50,50,30,.72)"/></svg>
<svg class="fi" style="left:1258.5px;top:350.5px" width="9" height="5" viewBox="0 0 9 5"><path d="M.2 .3h7.800L4.100 4.300z" fill="rgba(50,50,30,.72)"/></svg>
<svg class="fi" style="left:1331.5px;top:350.5px" width="9" height="5" viewBox="0 0 9 5"><path d="M.2 .3h7.800L4.100 4.300z" fill="rgba(50,50,30,.72)"/></svg>
<svg class="fi" style="left:1267px;top:344px" width="6" height="6" viewBox="0 0 6 6"><path d="M0 0h6v6z" fill="#e53935"/></svg>
<div class="ca" style="left:332px;top:365.72px;width:145.3px;height:16px;line-height:16px;text-align:right;letter-spacing:-.08px;">14.905323333333335</div>
<div class="ca" style="left:481px;top:365.72px;width:145.3px;height:16px;line-height:16px;text-align:right;letter-spacing:-.08px;">120.45026166666666</div>
<div class="ca" style="left:630px;top:365.72px;width:57px;height:16px;line-height:16px;text-align:center;">M</div>
<div class="ca" style="left:708px;top:365.72px;width:129px;height:16px;line-height:16px;text-align:center;">DEBOMA</div>
<div class="ca" style="left:838px;top:365.72px;width:140px;height:16px;line-height:16px;text-align:center;">QUENNIE</div>
<div class="ca" style="left:979px;top:365.72px;width:91px;height:16px;line-height:16px;text-align:center;">R</div>
<div class="ca" style="left:1132px;top:365.72px;width:121px;height:16px;line-height:16px;text-align:center;">3-Anak</div>
<div class="ca" style="left:1274px;top:365.72px;width:50.5px;height:16px;line-height:16px;text-align:center;">F</div>
<svg class="fi" style="left:692.5px;top:370.5px" width="9" height="5" viewBox="0 0 9 5"><path d="M.2 .3h7.800L4.100 4.300z" fill="rgba(50,50,30,.72)"/></svg>
<svg class="fi" style="left:1116.5px;top:370.5px" width="9" height="5" viewBox="0 0 9 5"><path d="M.2 .3h7.800L4.100 4.300z" fill="rgba(50,50,30,.72)"/></svg>
<svg class="fi" style="left:1258.5px;top:370.5px" width="9" height="5" viewBox="0 0 9 5"><path d="M.2 .3h7.800L4.100 4.300z" fill="rgba(50,50,30,.72)"/></svg>
<svg class="fi" style="left:1331.5px;top:370.5px" width="9" height="5" viewBox="0 0 9 5"><path d="M.2 .3h7.800L4.100 4.300z" fill="rgba(50,50,30,.72)"/></svg>
<svg class="fi" style="left:1267px;top:364px" width="6" height="6" viewBox="0 0 6 6"><path d="M0 0h6v6z" fill="#e53935"/></svg>
<div class="ca" style="left:332px;top:385.72px;width:145.3px;height:16px;line-height:16px;text-align:right;letter-spacing:-.08px;">14.905323333333335</div>
<div class="ca" style="left:481px;top:385.72px;width:145.3px;height:16px;line-height:16px;text-align:right;letter-spacing:-.08px;">120.45026166666666</div>
<div class="ca" style="left:630px;top:385.72px;width:57px;height:16px;line-height:16px;text-align:center;">M</div>
<div class="ca" style="left:708px;top:385.72px;width:129px;height:16px;line-height:16px;text-align:center;">MALLARI</div>
<div class="ca" style="left:838px;top:385.72px;width:140px;height:16px;line-height:16px;text-align:center;">WENNY</div>
<div class="ca" style="left:979px;top:385.72px;width:91px;height:16px;line-height:16px;text-align:center;">R</div>
<div class="ca" style="left:1132px;top:385.72px;width:121px;height:16px;line-height:16px;text-align:center;">3-Anak</div>
<div class="ca" style="left:1274px;top:385.72px;width:50.5px;height:16px;line-height:16px;text-align:center;">M</div>
<svg class="fi" style="left:692.5px;top:390.5px" width="9" height="5" viewBox="0 0 9 5"><path d="M.2 .3h7.800L4.100 4.300z" fill="rgba(50,50,30,.72)"/></svg>
<svg class="fi" style="left:1116.5px;top:390.5px" width="9" height="5" viewBox="0 0 9 5"><path d="M.2 .3h7.800L4.100 4.300z" fill="rgba(50,50,30,.72)"/></svg>
<svg class="fi" style="left:1258.5px;top:390.5px" width="9" height="5" viewBox="0 0 9 5"><path d="M.2 .3h7.800L4.100 4.300z" fill="rgba(50,50,30,.72)"/></svg>
<svg class="fi" style="left:1331.5px;top:390.5px" width="9" height="5" viewBox="0 0 9 5"><path d="M.2 .3h7.800L4.100 4.300z" fill="rgba(50,50,30,.72)"/></svg>
<svg class="fi" style="left:1267px;top:384px" width="6" height="6" viewBox="0 0 6 6"><path d="M0 0h6v6z" fill="#e53935"/></svg>
<div class="ca" style="left:332px;top:405.72px;width:145.3px;height:16px;line-height:16px;text-align:right;letter-spacing:-.08px;">14.905323333333335</div>
<div class="ca" style="left:481px;top:405.72px;width:145.3px;height:16px;line-height:16px;text-align:right;letter-spacing:-.08px;">120.45026166666666</div>
<div class="ca" style="left:630px;top:405.72px;width:57px;height:16px;line-height:16px;text-align:center;">M</div>
<div class="ca" style="left:708px;top:405.72px;width:129px;height:16px;line-height:16px;text-align:center;">MALLARI</div>
<div class="ca" style="left:838px;top:405.72px;width:140px;height:16px;line-height:16px;text-align:center;">MARK LOIUE</div>
<div class="ca" style="left:979px;top:405.72px;width:91px;height:16px;line-height:16px;text-align:center;">R</div>
<div class="ca" style="left:1132px;top:405.72px;width:121px;height:16px;line-height:16px;text-align:center;">3-Anak</div>
<div class="ca" style="left:1274px;top:405.72px;width:50.5px;height:16px;line-height:16px;text-align:center;">M</div>
<svg class="fi" style="left:692.5px;top:410.5px" width="9" height="5" viewBox="0 0 9 5"><path d="M.2 .3h7.800L4.100 4.300z" fill="rgba(50,50,30,.72)"/></svg>
<svg class="fi" style="left:1116.5px;top:410.5px" width="9" height="5" viewBox="0 0 9 5"><path d="M.2 .3h7.800L4.100 4.300z" fill="rgba(50,50,30,.72)"/></svg>
<svg class="fi" style="left:1258.5px;top:410.5px" width="9" height="5" viewBox="0 0 9 5"><path d="M.2 .3h7.800L4.100 4.300z" fill="rgba(50,50,30,.72)"/></svg>
<svg class="fi" style="left:1331.5px;top:410.5px" width="9" height="5" viewBox="0 0 9 5"><path d="M.2 .3h7.800L4.100 4.300z" fill="rgba(50,50,30,.72)"/></svg>
<svg class="fi" style="left:1267px;top:404px" width="6" height="6" viewBox="0 0 6 6"><path d="M0 0h6v6z" fill="#e53935"/></svg>
<div class="ca" style="left:332px;top:425.72px;width:145.3px;height:16px;line-height:16px;text-align:right;letter-spacing:-.08px;">14.905323333333335</div>
<div class="ca" style="left:481px;top:425.72px;width:145.3px;height:16px;line-height:16px;text-align:right;letter-spacing:-.08px;">120.45026166666666</div>
<div class="ca" style="left:630px;top:425.72px;width:57px;height:16px;line-height:16px;text-align:center;">M</div>
<div class="ca" style="left:708px;top:425.72px;width:129px;height:16px;line-height:16px;text-align:center;">MALLARI</div>
<div class="ca" style="left:838px;top:425.72px;width:140px;height:16px;line-height:16px;text-align:center;">IAN MATHEW</div>
<div class="ca" style="left:979px;top:425.72px;width:91px;height:16px;line-height:16px;text-align:center;">R</div>
<div class="ca" style="left:1132px;top:425.72px;width:121px;height:16px;line-height:16px;text-align:center;">3-Anak</div>
<div class="ca" style="left:1274px;top:425.72px;width:50.5px;height:16px;line-height:16px;text-align:center;">M</div>
<svg class="fi" style="left:692.5px;top:430.5px" width="9" height="5" viewBox="0 0 9 5"><path d="M.2 .3h7.800L4.100 4.300z" fill="rgba(50,50,30,.72)"/></svg>
<svg class="fi" style="left:1116.5px;top:430.5px" width="9" height="5" viewBox="0 0 9 5"><path d="M.2 .3h7.800L4.100 4.300z" fill="rgba(50,50,30,.72)"/></svg>
<svg class="fi" style="left:1258.5px;top:430.5px" width="9" height="5" viewBox="0 0 9 5"><path d="M.2 .3h7.800L4.100 4.300z" fill="rgba(50,50,30,.72)"/></svg>
<svg class="fi" style="left:1331.5px;top:430.5px" width="9" height="5" viewBox="0 0 9 5"><path d="M.2 .3h7.800L4.100 4.300z" fill="rgba(50,50,30,.72)"/></svg>
<svg class="fi" style="left:1267px;top:424px" width="6" height="6" viewBox="0 0 6 6"><path d="M0 0h6v6z" fill="#e53935"/></svg>
<div class="ca" style="left:332px;top:446.72px;width:145.3px;height:16px;line-height:16px;text-align:right;letter-spacing:-.08px;">14.905323333333335</div>
<div class="ca" style="left:481px;top:446.72px;width:145.3px;height:16px;line-height:16px;text-align:right;letter-spacing:-.08px;">120.45026166666666</div>
<div class="ca" style="left:630px;top:446.72px;width:57px;height:16px;line-height:16px;text-align:center;">M</div>
<div class="ca" style="left:708px;top:446.72px;width:129px;height:16px;line-height:16px;text-align:center;">MALLARI</div>
<div class="ca" style="left:838px;top:446.72px;width:140px;height:16px;line-height:16px;text-align:center;">JOHN MICHAEL</div>
<div class="ca" style="left:979px;top:446.72px;width:91px;height:16px;line-height:16px;text-align:center;">R</div>
<div class="ca" style="left:1132px;top:446.72px;width:121px;height:16px;line-height:16px;text-align:center;">3-Anak</div>
<div class="ca" style="left:1274px;top:446.72px;width:50.5px;height:16px;line-height:16px;text-align:center;">M</div>
<svg class="fi" style="left:692.5px;top:451.0px" width="9" height="5" viewBox="0 0 9 5"><path d="M.2 .3h7.800L4.100 4.300z" fill="rgba(50,50,30,.72)"/></svg>
<svg class="fi" style="left:1116.5px;top:451.0px" width="9" height="5" viewBox="0 0 9 5"><path d="M.2 .3h7.800L4.100 4.300z" fill="rgba(50,50,30,.72)"/></svg>
<svg class="fi" style="left:1258.5px;top:451.0px" width="9" height="5" viewBox="0 0 9 5"><path d="M.2 .3h7.800L4.100 4.300z" fill="rgba(50,50,30,.72)"/></svg>
<svg class="fi" style="left:1331.5px;top:451.0px" width="9" height="5" viewBox="0 0 9 5"><path d="M.2 .3h7.800L4.100 4.300z" fill="rgba(50,50,30,.72)"/></svg>
<svg class="fi" style="left:1267px;top:444px" width="6" height="6" viewBox="0 0 6 6"><path d="M0 0h6v6z" fill="#e53935"/></svg>
<div class="ca" style="left:332px;top:467.72px;width:145.3px;height:16px;line-height:16px;text-align:right;letter-spacing:-.08px;">14.905323333333335</div>
<div class="ca" style="left:481px;top:467.72px;width:145.3px;height:16px;line-height:16px;text-align:right;letter-spacing:-.08px;">120.45026166666666</div>
<div class="ca" style="left:630px;top:467.72px;width:57px;height:16px;line-height:16px;text-align:center;">M</div>
<div class="ca" style="left:708px;top:467.72px;width:129px;height:16px;line-height:16px;text-align:center;">MALLARI</div>
<div class="ca" style="left:838px;top:467.72px;width:140px;height:16px;line-height:16px;text-align:center;">PRINCESS</div>
<div class="ca" style="left:979px;top:467.72px;width:91px;height:16px;line-height:16px;text-align:center;">R</div>
<div class="ca" style="left:1132px;top:467.72px;width:121px;height:16px;line-height:16px;text-align:center;">3-Anak</div>
<div class="ca" style="left:1274px;top:467.72px;width:50.5px;height:16px;line-height:16px;text-align:center;">F</div>
<svg class="fi" style="left:692.5px;top:472.0px" width="9" height="5" viewBox="0 0 9 5"><path d="M.2 .3h7.800L4.100 4.300z" fill="rgba(50,50,30,.72)"/></svg>
<svg class="fi" style="left:1116.5px;top:472.0px" width="9" height="5" viewBox="0 0 9 5"><path d="M.2 .3h7.800L4.100 4.300z" fill="rgba(50,50,30,.72)"/></svg>
<svg class="fi" style="left:1258.5px;top:472.0px" width="9" height="5" viewBox="0 0 9 5"><path d="M.2 .3h7.800L4.100 4.300z" fill="rgba(50,50,30,.72)"/></svg>
<svg class="fi" style="left:1331.5px;top:472.0px" width="9" height="5" viewBox="0 0 9 5"><path d="M.2 .3h7.800L4.100 4.300z" fill="rgba(50,50,30,.72)"/></svg>
<svg class="fi" style="left:1267px;top:465px" width="6" height="6" viewBox="0 0 6 6"><path d="M0 0h6v6z" fill="#e53935"/></svg>
<div class="cc" style="left:48.5px;top:490.10px;width:146.5px;height:16px;line-height:16px;text-align:left;letter-spacing:0.27px;">250126</div>
<div class="ca" style="left:332px;top:488.72px;width:145.3px;height:16px;line-height:16px;text-align:right;letter-spacing:-.08px;">14.894421666666664</div>
<div class="ca" style="left:481px;top:488.72px;width:145.3px;height:16px;line-height:16px;text-align:right;letter-spacing:-.08px;">120.4698683333333.4</div>
<div class="ca" style="left:630px;top:488.72px;width:57px;height:16px;line-height:16px;text-align:center;">H</div>
<div class="ca" style="left:708px;top:488.72px;width:129px;height:16px;line-height:16px;text-align:center;">QUINTO</div>
<div class="ca" style="left:838px;top:488.72px;width:140px;height:16px;line-height:16px;text-align:center;">ANNABEL</div>
<div class="cc" style="left:1132px;top:490.10px;width:121px;height:16px;line-height:16px;text-align:center;letter-spacing:-0.072px;">1 - Puno ng Pamilya</div>
<div class="ca" style="left:1274px;top:488.72px;width:50.5px;height:16px;line-height:16px;text-align:center;">F</div>
<svg class="fi" style="left:692.5px;top:493.0px" width="9" height="5" viewBox="0 0 9 5"><path d="M.2 .3h7.800L4.100 4.300z" fill="rgba(10,10,20,.82)"/></svg>
<svg class="fi" style="left:1116.5px;top:493.0px" width="9" height="5" viewBox="0 0 9 5"><path d="M.2 .3h7.800L4.100 4.300z" fill="rgba(10,10,20,.82)"/></svg>
<svg class="fi" style="left:1258.5px;top:493.0px" width="9" height="5" viewBox="0 0 9 5"><path d="M.2 .3h7.800L4.100 4.300z" fill="rgba(10,10,20,.82)"/></svg>
<svg class="fi" style="left:1331.5px;top:493.0px" width="9" height="5" viewBox="0 0 9 5"><path d="M.2 .3h7.800L4.100 4.300z" fill="rgba(10,10,20,.82)"/></svg>
<svg class="fi" style="left:1267px;top:486px" width="6" height="6" viewBox="0 0 6 6"><path d="M0 0h6v6z" fill="#e53935"/></svg>
<div class="ca" style="left:332px;top:509.72px;width:145.3px;height:16px;line-height:16px;text-align:right;letter-spacing:-.08px;">14.894421666666664</div>
<div class="ca" style="left:481px;top:509.72px;width:145.3px;height:16px;line-height:16px;text-align:right;letter-spacing:-.08px;">120.4698683333333.4</div>
<div class="ca" style="left:630px;top:509.72px;width:57px;height:16px;line-height:16px;text-align:center;">M</div>
<div class="ca" style="left:708px;top:509.72px;width:129px;height:16px;line-height:16px;text-align:center;">QUINTO</div>
<div class="ca" style="left:838px;top:509.72px;width:140px;height:16px;line-height:16px;text-align:center;">RIZA</div>
<div class="cc" style="left:1132px;top:511.10px;width:121px;height:16px;line-height:16px;text-align:center;letter-spacing:-0.01px;">2 - Asawa</div>
<div class="ca" style="left:1274px;top:509.72px;width:50.5px;height:16px;line-height:16px;text-align:center;">F</div>
<svg class="fi" style="left:692.5px;top:514.0px" width="9" height="5" viewBox="0 0 9 5"><path d="M.2 .3h7.800L4.100 4.300z" fill="rgba(50,50,30,.72)"/></svg>
<svg class="fi" style="left:1116.5px;top:514.0px" width="9" height="5" viewBox="0 0 9 5"><path d="M.2 .3h7.800L4.100 4.300z" fill="rgba(50,50,30,.72)"/></svg>
<svg class="fi" style="left:1258.5px;top:514.0px" width="9" height="5" viewBox="0 0 9 5"><path d="M.2 .3h7.800L4.100 4.300z" fill="rgba(50,50,30,.72)"/></svg>
<svg class="fi" style="left:1331.5px;top:514.0px" width="9" height="5" viewBox="0 0 9 5"><path d="M.2 .3h7.800L4.100 4.300z" fill="rgba(50,50,30,.72)"/></svg>
<svg class="fi" style="left:1267px;top:507px" width="6" height="6" viewBox="0 0 6 6"><path d="M0 0h6v6z" fill="#e53935"/></svg>
<div class="cc" style="left:48.5px;top:532.10px;width:146.5px;height:16px;line-height:16px;text-align:left;letter-spacing:0.27px;">250346</div>
<div class="ca" style="left:332px;top:530.72px;width:145.3px;height:16px;line-height:16px;text-align:right;letter-spacing:-.08px;">14.905323333333335</div>
<div class="ca" style="left:481px;top:530.72px;width:145.3px;height:16px;line-height:16px;text-align:right;letter-spacing:-.08px;">120.45026166666666</div>
<div class="ca" style="left:630px;top:530.72px;width:57px;height:16px;line-height:16px;text-align:center;">H</div>
<div class="ca" style="left:708px;top:530.72px;width:129px;height:16px;line-height:16px;text-align:center;">CAYABYAB</div>
<div class="ca" style="left:838px;top:530.72px;width:140px;height:16px;line-height:16px;text-align:center;">KAYROLL ANN</div>
<div class="ca" style="left:979px;top:530.72px;width:91px;height:16px;line-height:16px;text-align:center;">D</div>
<div class="ca" style="left:1132px;top:530.72px;width:121px;height:16px;line-height:16px;text-align:center;">1-Puno ng pamilya</div>
<div class="ca" style="left:1274px;top:530.72px;width:50.5px;height:16px;line-height:16px;text-align:center;">M</div>
<svg class="fi" style="left:692.5px;top:535.0px" width="9" height="5" viewBox="0 0 9 5"><path d="M.2 .3h7.800L4.100 4.300z" fill="rgba(10,10,20,.82)"/></svg>
<svg class="fi" style="left:1116.5px;top:535.0px" width="9" height="5" viewBox="0 0 9 5"><path d="M.2 .3h7.800L4.100 4.300z" fill="rgba(10,10,20,.82)"/></svg>
<svg class="fi" style="left:1258.5px;top:535.0px" width="9" height="5" viewBox="0 0 9 5"><path d="M.2 .3h7.800L4.100 4.300z" fill="rgba(10,10,20,.82)"/></svg>
<svg class="fi" style="left:1331.5px;top:535.0px" width="9" height="5" viewBox="0 0 9 5"><path d="M.2 .3h7.800L4.100 4.300z" fill="rgba(10,10,20,.82)"/></svg>
<svg class="fi" style="left:1267px;top:528px" width="6" height="6" viewBox="0 0 6 6"><path d="M0 0h6v6z" fill="#e53935"/></svg>
<div class="ca" style="left:332px;top:551.72px;width:145.3px;height:16px;line-height:16px;text-align:right;letter-spacing:-.08px;">14.905323333333335</div>
<div class="ca" style="left:481px;top:551.72px;width:145.3px;height:16px;line-height:16px;text-align:right;letter-spacing:-.08px;">120.45026166666666</div>
<div class="ca" style="left:630px;top:551.72px;width:57px;height:16px;line-height:16px;text-align:center;">M</div>
<div class="ca" style="left:708px;top:551.72px;width:129px;height:16px;line-height:16px;text-align:center;">CAYABYAB</div>
<div class="ca" style="left:838px;top:551.72px;width:140px;height:16px;line-height:16px;text-align:center;">ALVIN</div>
<div class="ca" style="left:979px;top:551.72px;width:91px;height:16px;line-height:16px;text-align:center;">R</div>
<div class="ca" style="left:1132px;top:551.72px;width:121px;height:16px;line-height:16px;text-align:center;">2-asawa</div>
<div class="ca" style="left:1274px;top:551.72px;width:50.5px;height:16px;line-height:16px;text-align:center;">M</div>
<svg class="fi" style="left:692.5px;top:556.0px" width="9" height="5" viewBox="0 0 9 5"><path d="M.2 .3h7.800L4.100 4.300z" fill="rgba(50,50,30,.72)"/></svg>
<svg class="fi" style="left:1116.5px;top:556.0px" width="9" height="5" viewBox="0 0 9 5"><path d="M.2 .3h7.800L4.100 4.300z" fill="rgba(50,50,30,.72)"/></svg>
<svg class="fi" style="left:1258.5px;top:556.0px" width="9" height="5" viewBox="0 0 9 5"><path d="M.2 .3h7.800L4.100 4.300z" fill="rgba(50,50,30,.72)"/></svg>
<svg class="fi" style="left:1331.5px;top:556.0px" width="9" height="5" viewBox="0 0 9 5"><path d="M.2 .3h7.800L4.100 4.300z" fill="rgba(50,50,30,.72)"/></svg>
<svg class="fi" style="left:1267px;top:549px" width="6" height="6" viewBox="0 0 6 6"><path d="M0 0h6v6z" fill="#e53935"/></svg>
<div style="left:198px;top:209px;width:134px;height:348px;background:#fff;border:5px solid #000;box-sizing:border-box"></div>
<div class="conf" style="left:212.700px;top:293px;letter-spacing:0.223px">CONFIDENTIAL</div>
<div style="left:46px;top:168px;width:150px;height:1px;background:#1a73e8"></div>
<div style="left:46px;top:168px;width:1px;height:37px;background:#1a73e8"></div>
<div style="left:46px;top:204px;width:150px;height:1px;background:#1a73e8"></div>
<div style="left:194px;top:168px;width:2px;height:37px;background:#1a73e8"></div>
<div style="left:47px;top:169px;width:147px;height:35px;border:1px solid #f3f8d8;box-sizing:border-box"></div>
<div style="left:191px;top:201px;width:10px;height:10px;background:#fff;border-radius:50%"></div>
<div style="left:192px;top:202px;width:8px;height:8px;background:#0b57d0;border-radius:50%"></div>
</div>
<!-- right scroll area -->
<div style="left:1354px;top:144px;width:8px;height:415px;background:#fff;"></div>
<div style="left:1355px;top:144px;width:7px;height:23px;background:#f8f8f8;"></div>
<div style="left:1356px;top:169px;width:8px;height:25px;border-radius:4px;background:#dadce0;"></div>
<!-- bottom scrollbar -->
<div style="left:0;top:559px;width:1362px;height:13px;background:#f8f9fa;"></div>
<div style="left:46px;top:559px;width:1316px;height:13px;background:#fff;"></div>
<div style="left:0;top:559px;width:1362px;height:1px;background:#e4e4e4;"></div>
<div style="left:45px;top:559px;width:1px;height:13px;background:#d9d9d9;"></div>
<div style="left:48px;top:561px;width:490px;height:9px;border-radius:5px;background:#dadce0;"></div>
<div style="left:1323px;top:560px;width:39px;height:12px;background:#f8f9fa;"></div>
<div style="left:1323px;top:560px;width:1px;height:12px;background:#e3e3e3;"></div>
<div style="left:1339px;top:560px;width:1px;height:12px;background:#e3e3e3;"></div>
<div style="left:1354px;top:560px;width:1px;height:12px;background:#e3e3e3;"></div>
<svg style="left:1328px;top:562px" width="5" height="7" viewBox="0 0 5 7"><path d="M4.500 .5v6L.7 3.500z" fill="#9e9e9e"/></svg>
<svg style="left:1345px;top:562px" width="5" height="7" viewBox="0 0 5 7"><path d="M.5 .5v6L4.300 3.500z" fill="#9e9e9e"/></svg>
<div style="left:1354px;top:527px;width:8px;height:32px;background:#f8f9fa;"></div>
<div style="left:1354px;top:527px;width:8px;height:1px;background:#e3e3e3;"></div>
<div style="left:1354px;top:543px;width:8px;height:1px;background:#e3e3e3;"></div>
<div style="left:1354px;top:527px;width:1px;height:32px;background:#e3e3e3;"></div>
<svg style="left:1357px;top:533px" width="7" height="4" viewBox="0 0 7 4"><path d="M0 4h7L3.500 0z" fill="#9e9e9e"/></svg>
<svg style="left:1357px;top:550px" width="7" height="4" viewBox="0 0 7 4"><path d="M0 0h7L3.500 4z" fill="#9e9e9e"/></svg>
<div style="left:0;top:572px;width:1362px;height:1px;background:#e1e3e1;"></div>
<!-- bottom bar -->
<div style="left:134px;top:573px;width:213px;height:36px;background:#e1e9f7;"></div>
<div class="t" style="left:146px;top:583px;font-size:14px;line-height:18px;color:#0b57d0;-webkit-text-stroke:.5px #0b57d0;letter-spacing:.8px;">SAC Encoding Template</div>
<svg style="left:56px;top:586px" width="12" height="12" viewBox="0 0 12 12"><path d="M1 6H11M6 1V11" stroke="#444746" stroke-width="1.6" fill="none" /></svg>
<svg style="left:94px;top:586px" width="16" height="12" viewBox="0 0 16 12"><path d="M.8 1.700H15.200M.8 6H15.200M.8 10.300H15.200" stroke="#444746" stroke-width="1.6" fill="none" /></svg>
<svg style="left:327.0px;top:590.0px" width="8" height="4" viewBox="0 0 8 4"><path d="M0 0h8L4.0 4z" fill="#0b57d0"/></svg>
<svg style="left:1333px;top:586.7px" width="10" height="12" viewBox="0 0 10 12"><path d="M7.500 1.500L2.500 6L7.500 10.500" stroke="#444746" stroke-width="1.6" fill="none" /></svg>
<div style="left:0;top:609px;width:1362px;height:1px;background:#3a3a3a"></div>
</body></html>
